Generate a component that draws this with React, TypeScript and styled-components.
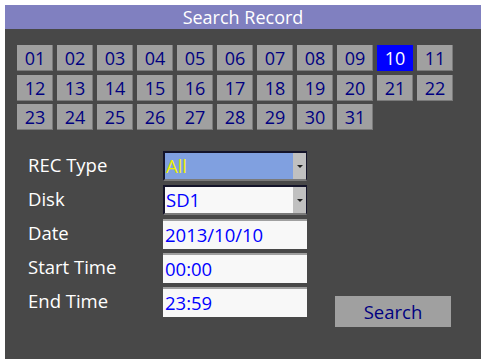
import React from 'react'
import styled, { createGlobalStyle } from 'styled-components'

const Global = createGlobalStyle`
  body {
    margin: 0;
    background: #ffffff;
    font-family: 'Open Sans', 'Noto Sans', 'DejaVu Sans', sans-serif;
  }
`

const Panel = styled.div`
  margin: 5px;
  width: 476px;
  height: 354px;
  background: #484848;
  display: flex;
  flex-direction: column;
`

const TitleBar = styled.div`
  height: 24px;
  background: #8080c0;
  color: #ffffff;
  font-size: 18px;
  line-height: 24px;
  text-align: center;
`

const DayGrid = styled.div`
  display: grid;
  grid-template-columns: repeat(11, 36px);
  grid-auto-rows: 26px;
  column-gap: 4px;
  row-gap: 3.5px;
  padding: 16px 0 0 12px;
`

const Day = styled.div<{ $active?: boolean }>`
  background: ${p => (p.$active ? '#0000ff' : '#a0a0a0')};
  color: ${p => (p.$active ? '#ffffff' : '#000080')};
  box-shadow: ${p => (p.$active ? 'none' : 'inset -1px -1px 0 #7a7a7a')};
  font-size: 18px;
  line-height: 26px;
  text-align: center;
`

const Body = styled.div`
  display: flex;
  padding: 21px 0 0 23px;
`

const Form = styled.div`
  display: flex;
  flex-direction: column;
  gap: 4px;
`

const Row = styled.div`
  display: flex;
  align-items: center;
  height: 30px;
`

const Label = styled.div`
  width: 135px;
  color: #ffffff;
  font-size: 18.5px;
  margin-top: -4px;
`

const Select = styled.div<{ $focused?: boolean }>`
  width: 144px;
  height: 30px;
  box-sizing: border-box;
  display: flex;
  border-top: 2px solid #14142a;
  border-left: 2px solid #14142a;
  border-bottom: 2px solid #7a7a7a;
  border-right: 1px solid #14142a;
  background: ${p => (p.$focused ? '#80a0e0' : '#f8f8f8')};
`

const SelectValue = styled.div<{ $focused?: boolean }>`
  flex: 1;
  color: ${p => (p.$focused ? '#f0f000' : '#0000ff')};
  font-size: 18.5px;
  line-height: 26px;
  padding-left: 1px;
`

const Arrow = styled.div`
  width: 13px;
  background: #c0c0c0;
  display: flex;
  align-items: center;
  justify-content: center;

  &::after {
    content: '';
    border-left: 3px solid transparent;
    border-right: 3px solid transparent;
    border-top: 3px solid #202020;
  }
`

const Field = styled.div`
  width: 144px;
  height: 30px;
  box-sizing: border-box;
  background: #f8f8f8;
  border-top: 2px solid #a0a0a0;
  color: #0000ff;
  font-size: 18.5px;
  line-height: 28px;
  padding-left: 2px;
`

const SearchButton = styled.div`
  margin: 145px 0 0 28px;
  width: 116px;
  height: 31px;
  background: #a0a0a0;
  color: #000080;
  font-size: 18.5px;
  line-height: 31px;
  text-align: center;
`

const days = Array.from({ length: 31 }, (_, i) => String(i + 1).padStart(2, '0'))

const App = () => (
  <>
    <Global />
    <Panel>
      <TitleBar>Search Record</TitleBar>
      <DayGrid>
        {days.map(d => (
          <Day key={d} $active={d === '10'}>{d}</Day>
        ))}
      </DayGrid>
      <Body>
        <Form>
          <Row>
            <Label>REC Type</Label>
            <Select $focused>
              <SelectValue $focused>All</SelectValue>
              <Arrow />
            </Select>
          </Row>
          <Row>
            <Label>Disk</Label>
            <Select>
              <SelectValue>SD1</SelectValue>
              <Arrow />
            </Select>
          </Row>
          <Row>
            <Label>Date</Label>
            <Field>2013/10/10</Field>
          </Row>
          <Row>
            <Label>Start Time</Label>
            <Field>00:00</Field>
          </Row>
          <Row>
            <Label>End Time</Label>
            <Field>23:59</Field>
          </Row>
        </Form>
        <SearchButton>Search</SearchButton>
      </Body>
    </Panel>
  </>
)

export default App
